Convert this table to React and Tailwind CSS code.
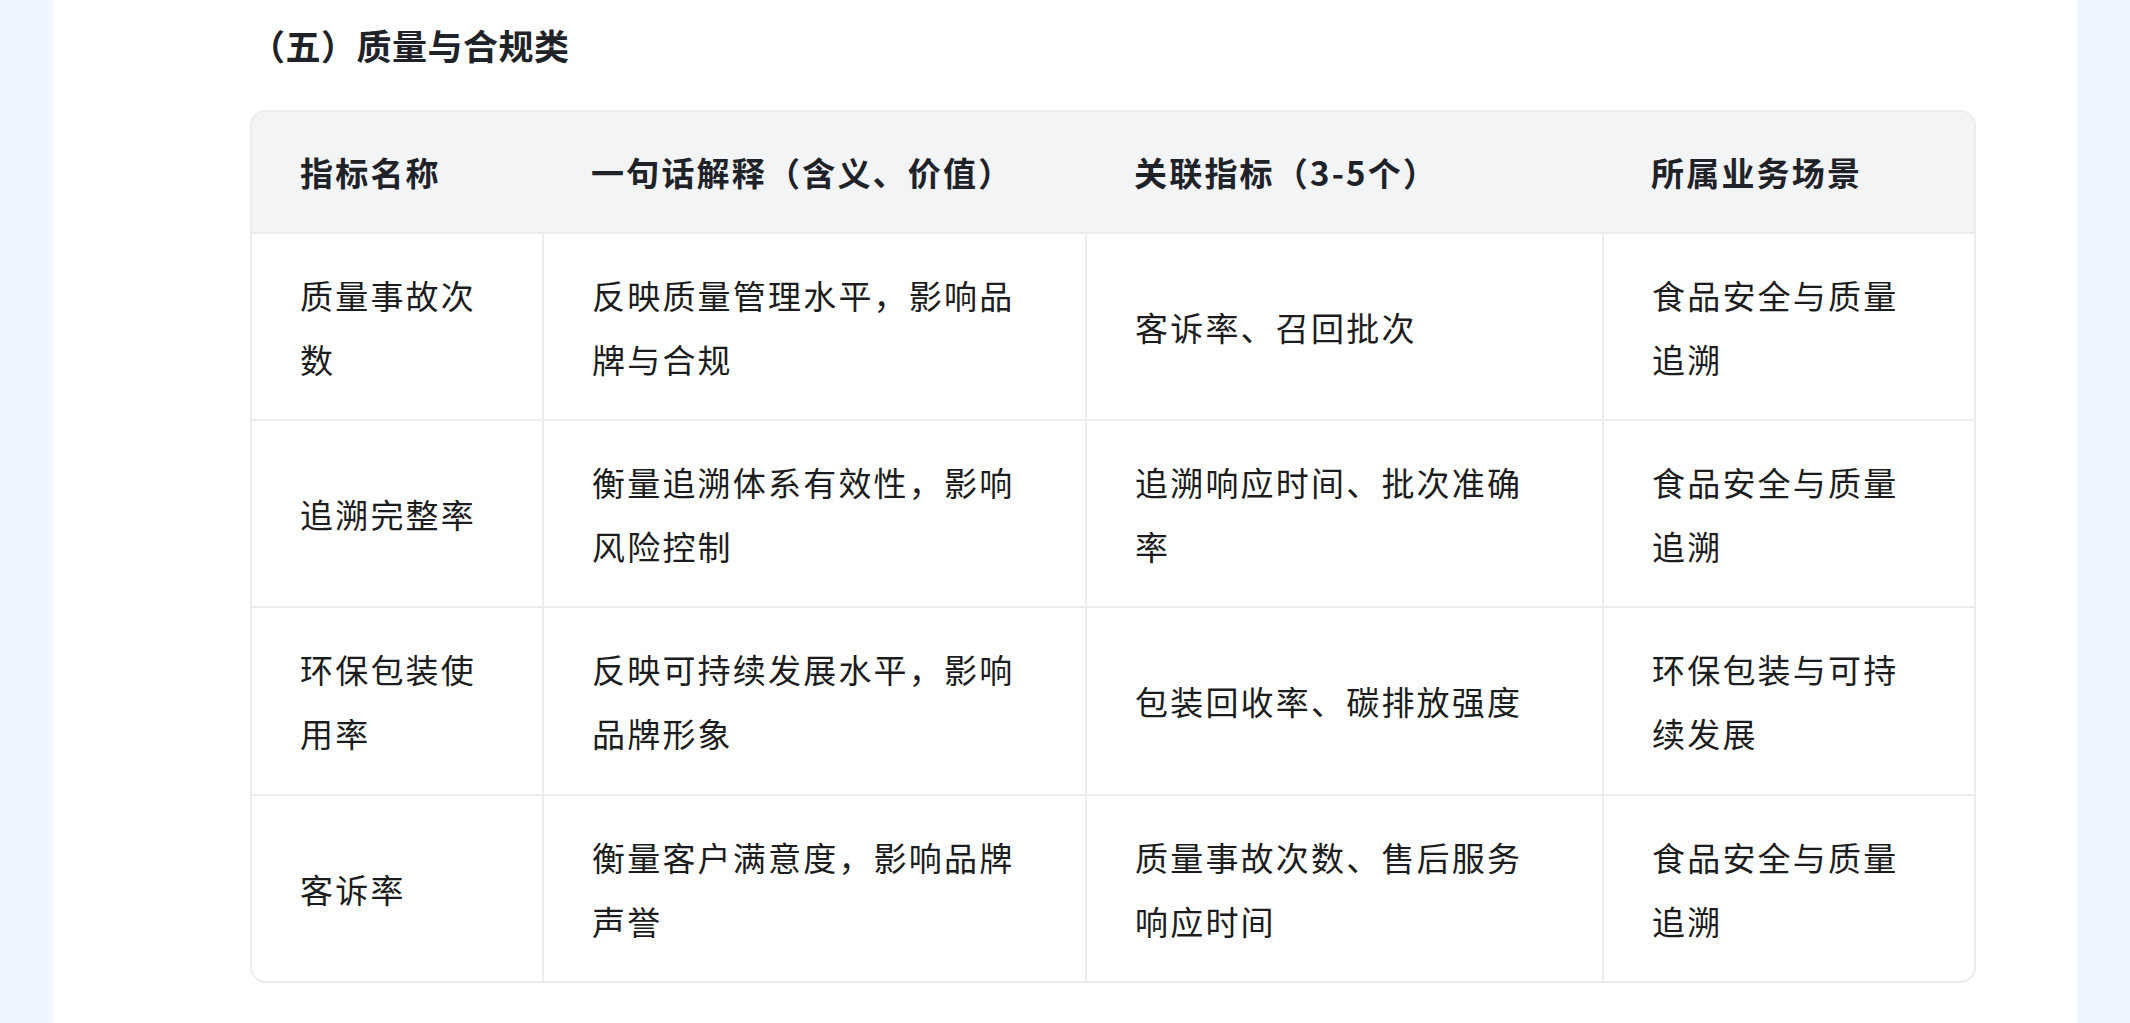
import React from "react";

const rows = [
  {
    h: "h-[187px]",
    name: ["质量事故次", "数"],
    desc: ["反映质量管理水平，影响品", "牌与合规"],
    rel: ["客诉率、召回批次"],
    scene: ["食品安全与质量", "追溯"],
  },
  {
    h: "h-[187px]",
    name: ["追溯完整率"],
    desc: ["衡量追溯体系有效性，影响", "风险控制"],
    rel: ["追溯响应时间、批次准确", "率"],
    scene: ["食品安全与质量", "追溯"],
  },
  {
    h: "h-[188px]",
    name: ["环保包装使", "用率"],
    desc: ["反映可持续发展水平，影响", "品牌形象"],
    rel: ["包装回收率、碳排放强度"],
    scene: ["环保包装与可持", "续发展"],
  },
  {
    h: "h-[186px]",
    name: ["客诉率"],
    desc: ["衡量客户满意度，影响品牌", "声誉"],
    rel: ["质量事故次数、售后服务", "响应时间"],
    scene: ["食品安全与质量", "追溯"],
  },
];

function Lines({ lines }) {
  return (
    <>
      {lines.map((l, i) => (
        <span key={i} className="block whitespace-nowrap">
          {l}
        </span>
      ))}
    </>
  );
}

export default function App() {
  const font = { fontFamily: '"Noto Sans CJK SC", "Noto Sans", sans-serif' };
  const headers = ["指标名称", "一句话解释（含义、价值）", "关联指标（3-5个）", "所属业务场景"];
  return (
    <div className="min-h-[1023px] bg-blue-50 px-[53px]" style={font}>
      <div className="min-h-[1023px] bg-white pl-[197px] pr-[100px] pt-[21px]">
        <h2 className="text-[35px] leading-[48px] font-bold tracking-[0.5px] text-[#1f2329]">
          （五）质量与合规类
        </h2>
        <div className="mt-[41px] w-[1726px] overflow-hidden rounded-[16px] border-2 border-[#eaecef]">
          <table className="w-full table-fixed border-collapse">
            <colgroup>
              <col className="w-[291px]" />
              <col className="w-[543px]" />
              <col className="w-[517px]" />
              <col />
            </colgroup>
            <thead>
              <tr className="bg-[#f2f4f6]">
                {headers.map((h) => (
                  <th
                    key={h}
                    className="h-[121px] px-12 text-left align-middle text-[33px] leading-[64px] font-bold tracking-[2.2px] text-[#1f2329] whitespace-nowrap"
                  >
                    {h}
                  </th>
                ))}
              </tr>
            </thead>
            <tbody>
              {rows.map((r, i) => (
                <tr key={i} className={r.h}>
                  {[r.name, r.desc, r.rel, r.scene].map((c, j) => (
                    <td
                      key={j}
                      className={
                        "px-12 py-[28px] align-middle text-[33px] leading-[64px] tracking-[2.2px] text-[#1c1d20] border-t-2 border-[#eaecef] " +
                        (j > 0 ? "border-l-2" : "")
                      }
                    >
                      <Lines lines={c} />
                    </td>
                  ))}
                </tr>
              ))}
            </tbody>
          </table>
        </div>
      </div>
    </div>
  );
}
